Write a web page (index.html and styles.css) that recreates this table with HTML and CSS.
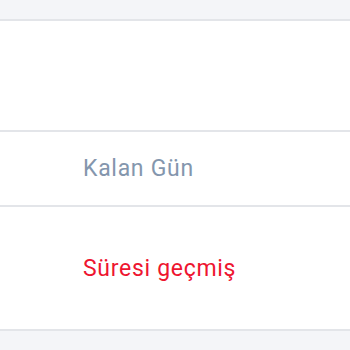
FILE: index.html
```html
<!DOCTYPE html>
<html lang="tr">
<head>
    <meta charset="UTF-8">
    <meta name="viewport" content="width=device-width, initial-scale=1.0">
    <title>Abonelik</title>
    <link rel="stylesheet" href="styles.css">
</head>
<body>
    <div class="page">
        <div class="top-band"></div>

        <div class="table">
            <div class="row row-empty"></div>
            <div class="row row-label">
                <span class="label">Kalan Gün</span>
            </div>
            <div class="row row-value">
                <span class="expired">Süresi geçmiş</span>
            </div>
        </div>

        <div class="bottom-band"></div>
    </div>
</body>
</html>
```

FILE: styles.css
```css
body {
    margin: 0;
    font-family: Roboto, 'Liberation Sans', Arial, sans-serif;
    background-color: #f4f5f8;
}

.page {
    width: 350px;
    height: 350px;
    display: flex;
    flex-direction: column;
}

.top-band {
    height: 19px;
    background-color: #f4f5f8;
    border-bottom: 2px solid #e3e5e9;
}

.table {
    background-color: #ffffff;
}

.row {
    display: flex;
    align-items: flex-start;
    padding-left: 83px;
    border-bottom: 2px solid #e3e5e9;
    box-sizing: border-box;
}

.row-empty {
    height: 111px;
}

.row-label {
    height: 75px;
    padding-top: 23px;
}

.row-value {
    height: 124px;
    padding-top: 48px;
}

.label,
.expired {
    font-size: 23px;
    letter-spacing: 0.7px;
}

.label {
    color: #8496ad; /* muted blue-gray */
}

.expired {
    color: #ee1530; /* red for expired */
}

.bottom-band {
    flex: 1;
    background-color: #f4f5f8;
}
```
